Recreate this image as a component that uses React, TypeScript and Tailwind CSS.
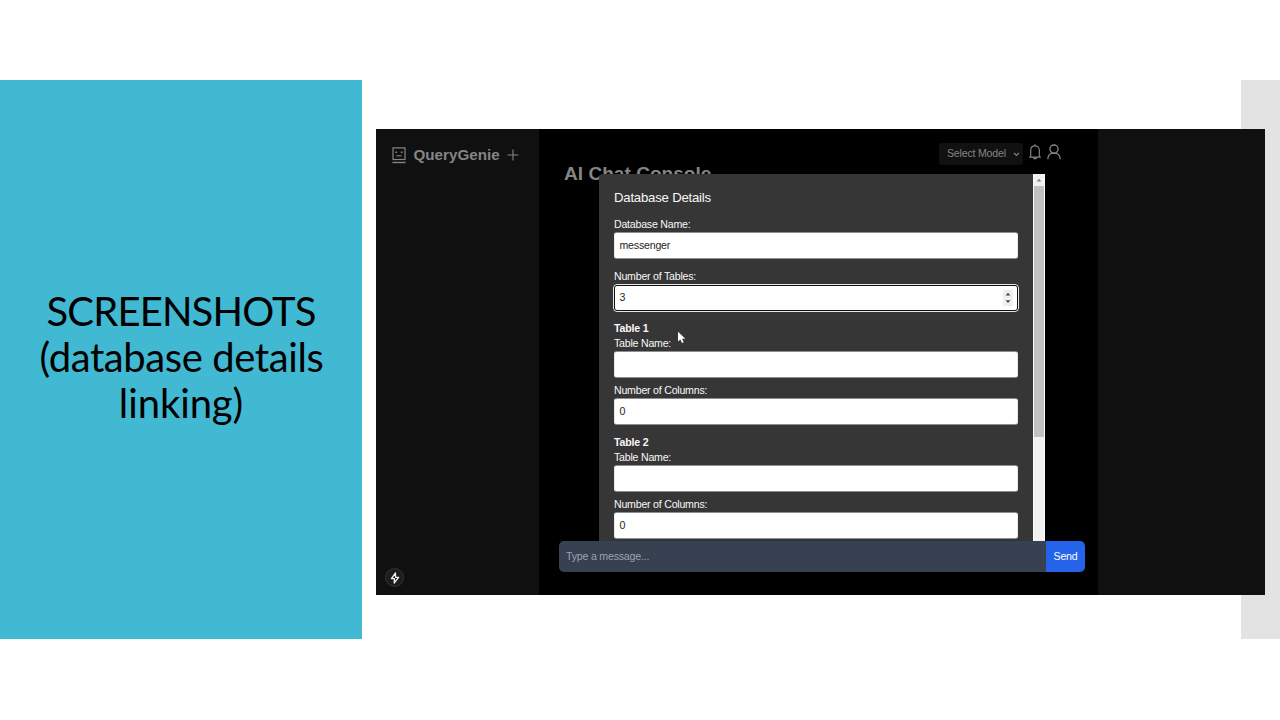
import type { ReactNode } from "react";

function RobotIcon() {
  return (
    <svg width="14" height="17" viewBox="0 0 14 17" fill="none" stroke="currentColor" className="shrink-0">
      <rect x="1" y="0.9" width="12" height="11.6" strokeWidth="1.2" />
      <path d="M0.4 15.5H13.6" strokeWidth="1.4" />
      <path d="M4.4 8.8H9.6" strokeWidth="1.1" />
      <path d="M3.4 5.2H5.1M8.9 5.2H10.6" strokeWidth="1.6" />
    </svg>
  );
}

function PlusIcon() {
  return (
    <svg width="12" height="12" viewBox="0 0 12 12" fill="none" stroke="currentColor" strokeWidth="1.1" className="shrink-0">
      <path d="M6 0.5V11.5M0.5 6H11.5" />
    </svg>
  );
}

function BellIcon() {
  return (
    <svg width="12" height="16" viewBox="0 0 12 16" fill="none" stroke="currentColor" strokeWidth="1.2" className="shrink-0">
      <path d="M0.1 13.2H11.9M1.7 13.2V6.2C1.7 3.7 3.5 1.9 6 1.9S10.3 3.7 10.3 6.2V13.2M6 0.3V1.9M4.4 13.4C4.6 15.4 7.4 15.4 7.6 13.4" />
    </svg>
  );
}

function UserIcon() {
  return (
    <svg width="14" height="16" viewBox="0 0 14 16" fill="none" stroke="currentColor" strokeWidth="1.3" className="shrink-0">
      <circle cx="7" cy="5.1" r="4.1" />
      <path d="M0.8 15.3C0.9 11.6 3.3 9.2 7 9.2S13.1 11.6 13.2 15.3" />
    </svg>
  );
}

function Label({ children }: { children: ReactNode }) {
  return (
    <div className="h-[15px] text-[10.6px] leading-[15px] tracking-[-0.22px] whitespace-nowrap">{children}</div>
  );
}

function Field({ value = "" }: { value?: string }) {
  return (
    <div className="flex h-[27px] items-center rounded-[3px] border border-[#8b8f95] border-x-[#e5e7eb] bg-white pl-[4.5px] text-[10.6px] tracking-[-0.2px] text-[#252525]">
      {value}
    </div>
  );
}

function NumberField({ value }: { value: string }) {
  return (
    <div className="-mx-px flex h-[28px] items-center justify-between rounded-[4px] border border-[#e8e8e8] bg-[#101010] p-px">
      <div className="flex h-full w-full items-center justify-between rounded-[2px] bg-white pr-[4px] pl-[4.5px] text-[10.6px] text-[#252525]">
        <span>{value}</span>
        <svg width="10" height="16" viewBox="0 0 10 16">
          <rect width="10" height="16" fill="#efefef" />
          <path d="M2.6 5.4L5 2.7L7.4 5.4ZM2.6 10.3L5 13L7.4 10.3Z" fill="#444" />
        </svg>
      </div>
    </div>
  );
}

function TableSection({ index }: { index: number }) {
  return (
    <section className="h-[114px]">
      <div className="h-[15px] text-[10.6px] leading-[15px] font-bold tracking-[-0.2px]">Table {index}</div>
      <Label>Table Name:</Label>
      <Field />
      <div className="h-[5px]" />
      <Label>Number of Columns:</Label>
      <Field value="0" />
    </section>
  );
}

function Dialog() {
  return (
    <div className="absolute top-[45px] left-[60px] flex h-[368px] w-[446px] overflow-hidden rounded-tl-[4px] bg-[#363636] text-[#f8f8f8]">
      <div className="w-[434px] shrink-0 px-[15px] pt-[15px]">
        <h2 className="mb-[10px] h-[18px] text-[13.2px] leading-[18px] tracking-[-0.22px]">Database Details</h2>
        <Label>Database Name:</Label>
        <Field value="messenger" />
        <div className="h-[10px]" />
        <Label>Number of Tables:</Label>
        <NumberField value="3" />
        <div className="h-[9px]" />
        <TableSection index={1} />
        <TableSection index={2} />
      </div>
      <div className="flex w-[12px] flex-col items-center border-x border-[#fafafa] bg-[#f1f1f1]">
        <div className="flex h-[12px] items-center">
          <svg width="6" height="4" viewBox="0 0 6 4">
            <path d="M0.5 3.5L3 0.7L5.5 3.5Z" fill="#888" />
          </svg>
        </div>
        <div className="h-[251px] w-full bg-[#c1c1c1]" />
      </div>
    </div>
  );
}

export default function App() {
  return (
    <div className="h-[720px] w-[1280px] overflow-hidden bg-white py-[80px] font-['Liberation_Sans',sans-serif]">
      <div className="relative flex h-[559px]">
        <div className="flex w-[362px] shrink-0 flex-col items-center justify-center bg-[#41b9d3] pb-[5px] text-center font-['Lato',sans-serif] text-[40px] leading-[46px] text-black">
          <div className="tracking-[-0.85px] whitespace-nowrap">SCREENSHOTS</div>
          <div className="pl-px tracking-[-0.4px] whitespace-nowrap">(database details</div>
          <div className="tracking-[-0.1px] whitespace-nowrap">linking)</div>
        </div>
        <div className="absolute top-0 right-0 h-full w-[39px] bg-[#e3e3e3]" />
        <div className="relative mt-[49px] ml-[14px] flex h-[466px] w-[889px] bg-[#101010]">
          <aside className="flex w-[163px] shrink-0 flex-col justify-between bg-[#101010] pt-[17px] pb-[8px] pl-[16px] text-[#858585]">
            <div className="flex h-[18px] items-center">
              <RobotIcon />
              <span className="ml-[7.5px] text-[15.2px] font-bold">QueryGenie</span>
              <span className="ml-[7px]">
                <PlusIcon />
              </span>
            </div>
            <div className="-ml-[7px] flex size-[19px] items-center justify-center rounded-full border border-[#343434] bg-[#1c1c1c]">
              <svg width="10" height="12" viewBox="0 0 10 12" fill="none" stroke="#f2f2f2" strokeWidth="1.3" strokeLinejoin="round">
                <path d="M5.5 1L1.4 6.6H4.4L4.2 11L8.6 5.3H5.5Z" />
              </svg>
            </div>
          </aside>
          <main className="relative flex w-[559px] shrink-0 flex-col bg-black">
            <div className="mt-[14px] flex h-[22px] items-center pl-[400px] text-[#858585]">
              <div className="flex h-[22px] w-[84px] shrink-0 items-center justify-between rounded-[3px] bg-[#111] pr-[3px] pl-[8px] text-[10.6px] tracking-[-0.2px] whitespace-nowrap">
                Select Model
                <svg width="7" height="5" viewBox="0 0 7 5" fill="none" stroke="currentColor" strokeWidth="1.1">
                  <path d="M1 1L3.5 3.5L6 1" />
                </svg>
              </div>
              <span className="mb-[5px] ml-[6px]">
                <BellIcon />
              </span>
              <span className="mb-[5px] ml-[5.5px]">
                <UserIcon />
              </span>
            </div>
            <h1 className="-mt-[3px] pl-[25px] text-[19.1px] leading-[24px] font-bold text-[#858585]">
              AI Chat Console
            </h1>
            <Dialog />
            <div className="relative mt-auto mr-[13px] mb-[23px] ml-[20px] flex h-[31px] overflow-hidden rounded-[5px] text-[10.6px] tracking-[-0.2px]">
              <div className="flex flex-1 items-center bg-[#374151] pl-[7px] text-[#9ca3af]">Type a message...</div>
              <div className="flex w-[39px] items-center justify-center bg-[#2563eb] text-white">Send</div>
            </div>
          </main>
          <svg className="absolute top-[202px] left-[301px]" width="10" height="14" viewBox="0 0 10 14">
            <path d="M1 0.7V10.6L3.3 8.5L5 12.1L6.7 11.3L5.1 7.8H8.3Z" fill="#fff" />
          </svg>
        </div>
      </div>
    </div>
  );
}
